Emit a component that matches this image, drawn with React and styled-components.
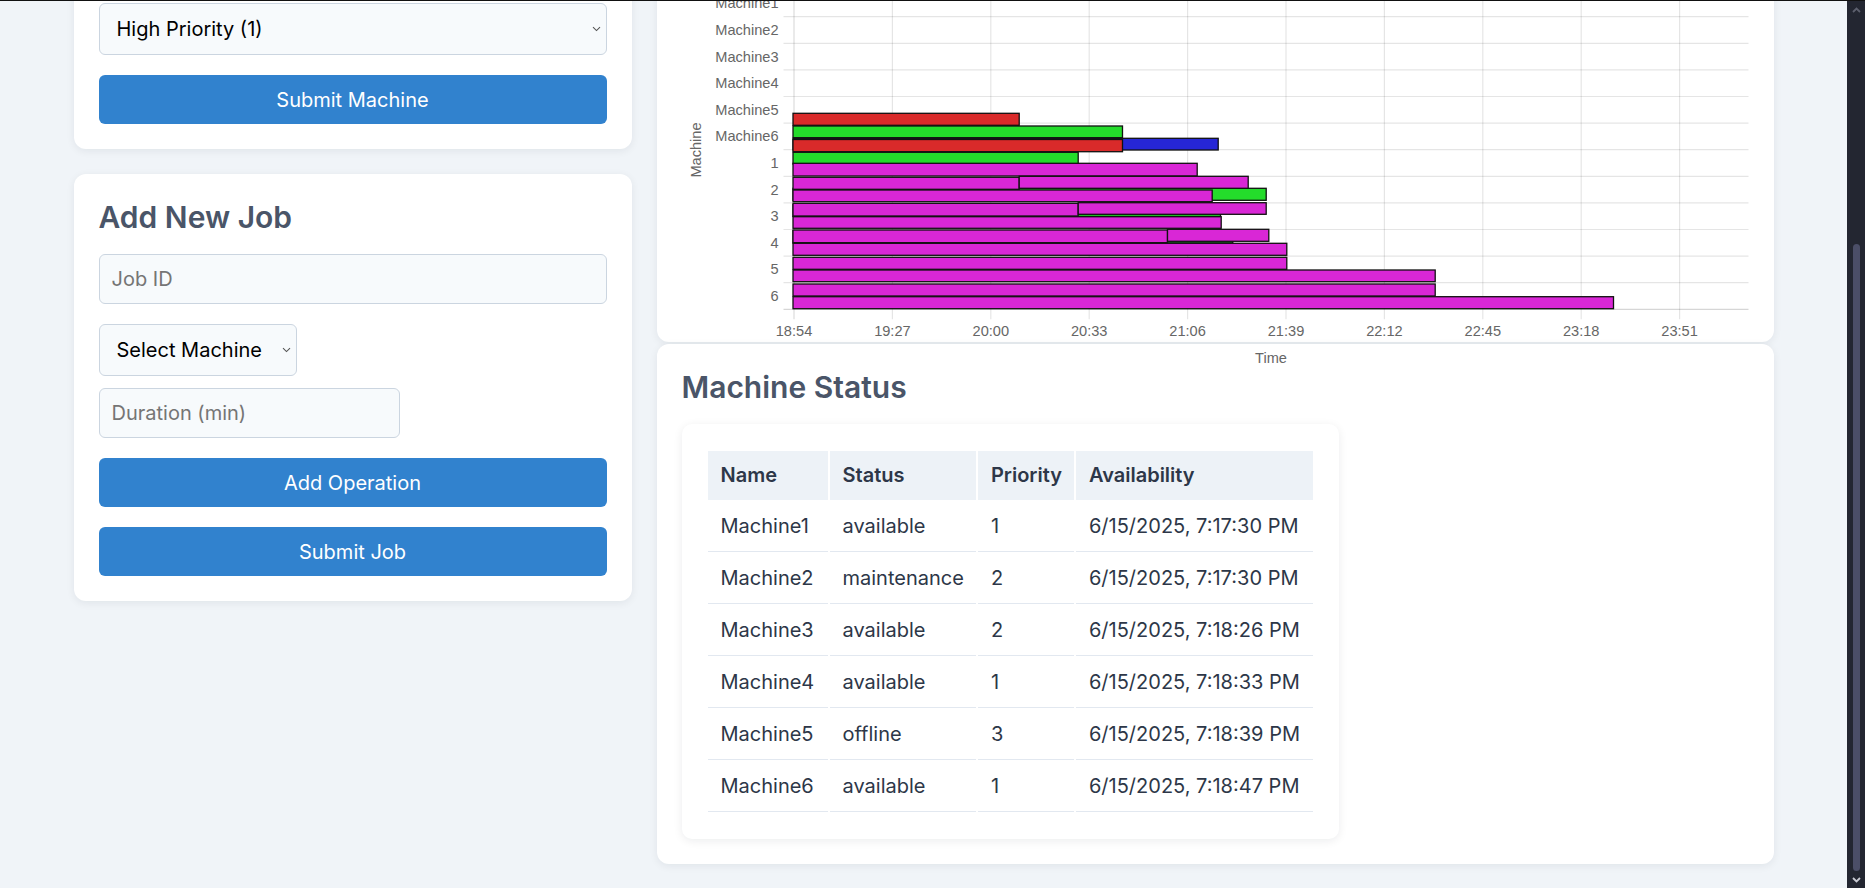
import React from 'react';
import styled, { createGlobalStyle } from 'styled-components';

const GlobalStyle = createGlobalStyle`
  * { box-sizing: border-box; }
  html, body { margin: 0; height: 100%; overflow: hidden; }
  body {
    background: #f0f4f8;
    font-family: Inter, "Noto Sans", sans-serif;
    color: #2d3748;
  }
`;

// window frame: page viewport + dark scrollbar
const Frame = styled.div`
  display: flex;
  height: 100vh;
  border-top: 1px solid #111;
`;

// page is scrolled to the bottom, so the content overflows upwards
const Viewport = styled.div`
  flex: 1;
  min-width: 0;
  display: flex;
  flex-direction: column;
  justify-content: flex-end;
  overflow: hidden;
`;

const Page = styled.div`
  width: 100%;
  max-width: 1700px;
  margin: 0 auto;
  padding-bottom: 24px;
  flex-shrink: 0;
`;

const Header = styled.h1`
  margin: 0;
  padding: 30px 0 40px;
  font-size: 36px;
  line-height: 44px;
  font-weight: 700;
  color: #2d3748;
`;

const Dashboard = styled.div`
  display: grid;
  grid-template-columns: 1fr 2fr;
  gap: 25px;
  align-items: start;
`;

const Column = styled.div`
  display: flex;
  flex-direction: column;
  gap: ${props => props.$gap}px;
`;

const Card = styled.section`
  background: #fff;
  border-radius: 12px;
  padding: 25px;
  box-shadow: 0 2px 8px rgba(15, 23, 42, 0.07);
`;

const CardTitle = styled.h2`
  margin: 0 0 19px;
  font-size: 30px;
  line-height: 36px;
  font-weight: 600;
  color: #4a5568;
`;

const Form = styled.div`
  display: flex;
  flex-direction: column;
  gap: 20px;
`;

const OperationRow = styled.div`
  display: flex;
  flex-direction: column;
  align-items: flex-start;
  gap: 12px;
`;

const TextInput = styled.input`
  height: 50px;
  width: ${props => props.$width || '100%'};
  padding: 0 12px;
  font-family: inherit;
  font-size: 20px;
  color: #2d3748;
  background: #f7fafc;
  border: 1px solid #cbd5e0;
  border-radius: 6px;
  outline: none;

  &::placeholder {
    color: #757575;
  }
`;

const SelectWrap = styled.div`
  position: relative;
  width: ${props => props.$width || '100%'};
`;

const Select = styled.select`
  appearance: none;
  display: block;
  height: 52px;
  width: 100%;
  padding: 0 30px 0 17px;
  font-family: inherit;
  font-size: 20px;
  color: #000;
  background: #f7fafc;
  border: 1px solid #cbd5e0;
  border-radius: 6px;
  outline: none;
`;

// small chevron drawn over the right end of the select
const SelectArrow = styled.svg`
  position: absolute;
  right: 6px;
  top: 50%;
  margin-top: -3px;
  pointer-events: none;
  color: #555;
`;

const Button = styled.button`
  height: 49px;
  width: 100%;
  border: none;
  border-radius: 6px;
  background: #3182ce;
  color: #fff;
  font-family: inherit;
  font-size: 20px;
  font-weight: 400;
  cursor: pointer;
`;

// chart canvas box, positioned so the overflow paints over the next card
const ChartBox = styled.div`
  position: relative;
  height: 456px;
`;

const ChartSvg = styled.svg`
  display: block;
  overflow: visible;
  font-family: "Liberation Sans", Arial, sans-serif;
`;

const TableCard = styled.div`
  width: fit-content;
  background: #fff;
  border-radius: 10px;
  padding: 25px 24px;
  box-shadow: 0 2px 10px rgba(15, 23, 42, 0.08);
`;

const Table = styled.table`
  border-collapse: separate;
  border-spacing: 2px;
  font-size: 20px;
  line-height: 25px;
`;

const Th = styled.th`
  width: ${props => props.$w}px;
  padding: 12px 12px 12px 13px;
  text-align: left;
  font-weight: 600;
  color: #2d3748;
  background: #edf2f7;
  white-space: nowrap;
`;

const Td = styled.td`
  padding: 12px 12px 12px 13px;
  color: #2d3748;
  border-bottom: 1px solid #e2e8f0;
  white-space: nowrap;
`;

const ScrollBar = styled.div`
  width: 18px;
  flex-shrink: 0;
  display: flex;
  flex-direction: column;
  align-items: center;
  background: #232631;
`;

const ScrollArrow = styled.div`
  height: 17px;
  display: flex;
  align-items: center;
  justify-content: center;
  color: ${props => props.$color};
`;

const ScrollTrack = styled.div`
  flex: 1;
  display: flex;
  flex-direction: column;
  justify-content: flex-end;
`;

const ScrollThumb = styled.div`
  width: 7px;
  height: 627px;
  border-radius: 4px;
  background: #4b4e67;
`;

const COLORS = {
  red: '#d92a2a',
  green: '#24dc2b',
  blue: '#2626d6',
  magenta: '#d927d6',
};

const PLOT = { left: 793, right: 1748, bottom: 309.3, band: 26.6, step: 98.4 };

const yLabels = ['Machine1', 'Machine2', 'Machine3', 'Machine4', 'Machine5', 'Machine6', '1', '2', '3', '4', '5', '6'];
const xTicks = ['18:54', '19:27', '20:00', '20:33', '21:06', '21:39', '22:12', '22:45', '23:18', '23:51'];

// bars in page pixels (x0 defaults to plot start)
const bars = [
  { y: 188.3, h: 12, x1: 1265.7, c: 'green' },
  { y: 204.5, h: 12, x1: 1220, c: 'green' },
  { y: 230.5, h: 12.5, x1: 1232.3, c: 'green' },
  { y: 113.3, h: 12, x1: 1018.7, c: 'red' },
  { y: 126, h: 11.7, x1: 1122, c: 'green' },
  { y: 138.3, h: 11.7, x1: 1217.7, c: 'blue' },
  { y: 139.5, h: 12.2, x1: 1122, c: 'red' },
  { y: 152.3, h: 11.7, x1: 1077.7, c: 'green' },
  { y: 163.3, h: 12.7, x1: 1196.7, c: 'magenta' },
  { y: 177.3, h: 12, x1: 1018.7, c: 'magenta' },
  { x0: 1018.7, y: 176.3, h: 12, x1: 1247.7, c: 'magenta' },
  { y: 190, h: 11.7, x1: 1211.7, c: 'magenta' },
  { y: 203.3, h: 12.7, x1: 1077.7, c: 'magenta' },
  { x0: 1077.7, y: 202.7, h: 11.6, x1: 1265.7, c: 'magenta' },
  { y: 216.7, h: 11.6, x1: 1220.7, c: 'magenta' },
  { y: 230, h: 12.7, x1: 1167, c: 'magenta' },
  { x0: 1167, y: 229.3, h: 12, x1: 1268.3, c: 'magenta' },
  { y: 243.3, h: 12, x1: 1286.3, c: 'magenta' },
  { y: 257.3, h: 12, x1: 1286.3, c: 'magenta' },
  { y: 270, h: 11.7, x1: 1434.7, c: 'magenta' },
  { y: 284, h: 12, x1: 1434.7, c: 'magenta' },
  { y: 296.7, h: 12, x1: 1613, c: 'magenta' },
];

const machines = [
  { name: 'Machine1', status: 'available', priority: 1, time: '6/15/2025, 7:17:30 PM' },
  { name: 'Machine2', status: 'maintenance', priority: 2, time: '6/15/2025, 7:17:30 PM' },
  { name: 'Machine3', status: 'available', priority: 2, time: '6/15/2025, 7:18:26 PM' },
  { name: 'Machine4', status: 'available', priority: 1, time: '6/15/2025, 7:18:33 PM' },
  { name: 'Machine5', status: 'offline', priority: 3, time: '6/15/2025, 7:18:39 PM' },
  { name: 'Machine6', status: 'available', priority: 1, time: '6/15/2025, 7:18:47 PM' },
];

const GanttChart = () => {
  const top = PLOT.bottom - yLabels.length * PLOT.band;
  return (
    <ChartSvg width="1067" height="520" viewBox="681.5 -139 1067 520">
      {Array.from({ length: yLabels.length + 1 }, (_, k) => (
        <line
          key={'h' + k}
          x1={PLOT.left - 10}
          x2={PLOT.right}
          y1={PLOT.bottom - k * PLOT.band}
          y2={PLOT.bottom - k * PLOT.band}
          stroke={k === 0 ? 'rgba(0,0,0,0.16)' : 'rgba(0,0,0,0.1)'}
          strokeWidth="1.2"
        />
      ))}
      {xTicks.map((t, k) => (
        <line
          key={'v' + k}
          x1={PLOT.left + 0.5 + k * PLOT.step}
          x2={PLOT.left + 0.5 + k * PLOT.step}
          y1={top}
          y2={PLOT.bottom + 10}
          stroke={k === 0 ? 'rgba(0,0,0,0.14)' : 'rgba(0,0,0,0.1)'}
          strokeWidth="1.2"
        />
      ))}
      {bars.map((b, i) => (
        <rect
          key={i}
          x={b.x0 || 792.5}
          y={b.y}
          width={b.x1 - (b.x0 || 792.5)}
          height={b.h}
          fill={COLORS[b.c]}
          stroke="#111"
          strokeWidth="1.3"
        />
      ))}
      {yLabels.map((label, k) => (
        <text
          key={label}
          x={778}
          y={PLOT.bottom - (yLabels.length - k - 0.5) * PLOT.band}
          textAnchor="end"
          dominantBaseline="central"
          fontSize="14.6"
          fill="#666"
        >
          {label}
        </text>
      ))}
      {xTicks.map((t, k) => (
        <text
          key={t}
          x={PLOT.left + 0.5 + k * PLOT.step}
          y={331}
          textAnchor="middle"
          dominantBaseline="central"
          fontSize="14.6"
          fill="#666"
        >
          {t}
        </text>
      ))}
      <text
        x={695.7}
        y={150}
        transform="rotate(-90 695.7 150)"
        textAnchor="middle"
        dominantBaseline="central"
        fontSize="14.6"
        fill="#666"
      >
        Machine
      </text>
      <text x={1270.5} y={358} textAnchor="middle" dominantBaseline="central" fontSize="14.6" fill="#666">
        Time
      </text>
    </ChartSvg>
  );
};

const Dropdown = ({ width, children, ...rest }) => (
  <SelectWrap $width={width}>
    <Select {...rest}>{children}</Select>
    <SelectArrow width="9" height="6" viewBox="0 0 9 6">
      <polyline points="1,1.2 4.5,4.6 8,1.2" fill="none" stroke="currentColor" strokeWidth="1.1" />
    </SelectArrow>
  </SelectWrap>
);

const Chevron = ({ up }) => (
  <svg width="9" height="6" viewBox="0 0 9 6">
    <polyline
      points={up ? '1,5 4.5,1.5 8,5' : '1,1 4.5,4.5 8,1'}
      fill="none"
      stroke="currentColor"
      strokeWidth="1.8"
    />
  </svg>
);

const App = () => {
  const columns = [
    { label: 'Name', w: 120 },
    { label: 'Status', w: 146 },
    { label: 'Priority', w: 96 },
    { label: 'Availability', w: 237 },
  ];

  return (
    <>
      <GlobalStyle />
      <Frame>
        <Viewport>
          <Page>
            <Header>Job Shop Scheduler</Header>
            <Dashboard>
              <Column $gap={25}>
                <Card>
                  <CardTitle>Add New Machine</CardTitle>
                  <Form>
                    <TextInput placeholder="Machine Name" />
                    <Dropdown defaultValue="available">
                      <option value="available">Available</option>
                      <option value="maintenance">Maintenance</option>
                      <option value="offline">Offline</option>
                    </Dropdown>
                    <Dropdown defaultValue="1">
                      <option value="1">High Priority (1)</option>
                      <option value="2">Medium Priority (2)</option>
                      <option value="3">Low Priority (3)</option>
                    </Dropdown>
                    <Button>Submit Machine</Button>
                  </Form>
                </Card>
                <Card>
                  <CardTitle>Add New Job</CardTitle>
                  <Form>
                    <TextInput placeholder="Job ID" />
                    <OperationRow>
                      <Dropdown width="198px" defaultValue="">
                        <option value="">Select Machine</option>
                        {machines.map(m => (
                          <option key={m.name} value={m.name}>{m.name}</option>
                        ))}
                      </Dropdown>
                      <TextInput $width="301px" placeholder="Duration (min)" />
                    </OperationRow>
                    <Button>Add Operation</Button>
                    <Button>Submit Job</Button>
                  </Form>
                </Card>
              </Column>

              <Column $gap={2}>
                <Card>
                  <CardTitle>Production Schedule</CardTitle>
                  <ChartBox>
                    <GanttChart />
                  </ChartBox>
                </Card>
                <Card>
                  <CardTitle>Machine Status</CardTitle>
                  <TableCard>
                    <Table>
                      <thead>
                        <tr>
                          {columns.map(col => (
                            <Th key={col.label} $w={col.w}>{col.label}</Th>
                          ))}
                        </tr>
                      </thead>
                      <tbody>
                        {machines.map(m => (
                          <tr key={m.name}>
                            <Td>{m.name}</Td>
                            <Td>{m.status}</Td>
                            <Td>{m.priority}</Td>
                            <Td>{m.time}</Td>
                          </tr>
                        ))}
                      </tbody>
                    </Table>
                  </TableCard>
                </Card>
              </Column>
            </Dashboard>
          </Page>
        </Viewport>
        <ScrollBar>
          <ScrollArrow $color="#5c5f6d">
            <Chevron up />
          </ScrollArrow>
          <ScrollTrack>
            <ScrollThumb />
          </ScrollTrack>
          <ScrollArrow $color="#c9cad3">
            <Chevron />
          </ScrollArrow>
        </ScrollBar>
      </Frame>
    </>
  );
};

export default App;
